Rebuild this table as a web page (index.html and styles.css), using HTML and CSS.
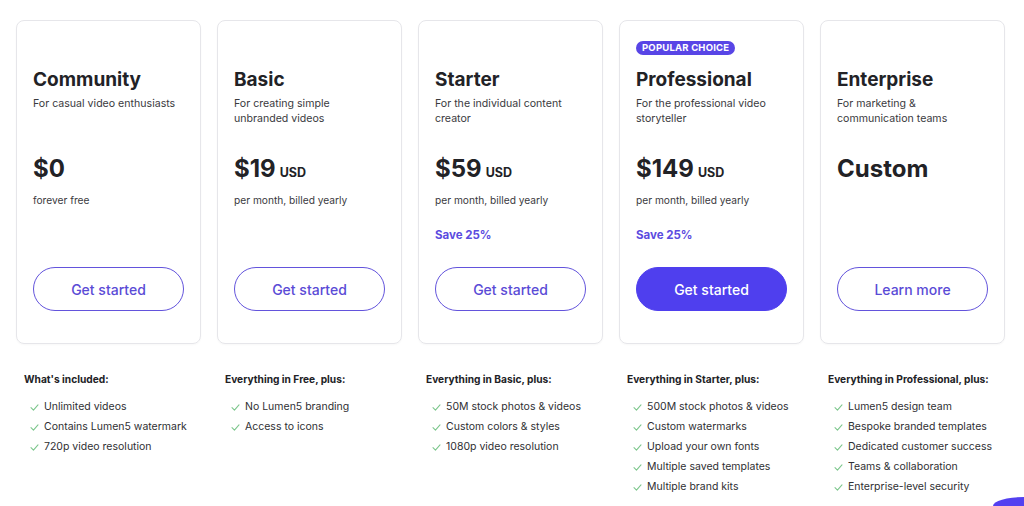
FILE: index.html
```html
<!DOCTYPE html>
<html lang="en">
<head>
<meta charset="utf-8">
<title>Pricing</title>
<link rel="stylesheet" href="styles.css">
</head>
<body>
<div class="pricing">
  <div class="card">
    <div class="badge-row"></div>
    <h2 class="plan">Community</h2>
    <p class="desc">For casual video enthusiasts</p>
    <div class="price">$0</div>
    <p class="period">forever free</p>
    <a class="btn">Get started</a>
  </div>
  <div class="card">
    <div class="badge-row"></div>
    <h2 class="plan">Basic</h2>
    <p class="desc">For creating simple unbranded videos</p>
    <div class="price">$19<span class="cur">USD</span></div>
    <p class="period">per month, billed yearly</p>
    <a class="btn">Get started</a>
  </div>
  <div class="card">
    <div class="badge-row"></div>
    <h2 class="plan">Starter</h2>
    <p class="desc">For the individual content creator</p>
    <div class="price">$59<span class="cur">USD</span></div>
    <p class="period">per month, billed yearly</p>
    <p class="save">Save 25%</p>
    <a class="btn">Get started</a>
  </div>
  <div class="card">
    <div class="badge-row"><span class="badge">POPULAR CHOICE</span></div>
    <h2 class="plan">Professional</h2>
    <p class="desc">For the professional video storyteller</p>
    <div class="price">$149<span class="cur">USD</span></div>
    <p class="period">per month, billed yearly</p>
    <p class="save">Save 25%</p>
    <a class="btn btn-primary">Get started</a>
  </div>
  <div class="card">
    <div class="badge-row"></div>
    <h2 class="plan">Enterprise</h2>
    <p class="desc narrow">For marketing &amp; communication teams</p>
    <div class="price">Custom</div>
    <a class="btn">Learn more</a>
  </div>

  <div class="features">
    <h3>What's included:</h3>
    <ul>
      <li><svg class="check" viewBox="0 0 10 8"><path d="M1 4.2 3.8 7 9 1"/></svg>Unlimited videos</li>
      <li><svg class="check" viewBox="0 0 10 8"><path d="M1 4.2 3.8 7 9 1"/></svg>Contains Lumen5 watermark</li>
      <li><svg class="check" viewBox="0 0 10 8"><path d="M1 4.2 3.8 7 9 1"/></svg>720p video resolution</li>
    </ul>
  </div>
  <div class="features">
    <h3>Everything in Free, plus:</h3>
    <ul>
      <li><svg class="check" viewBox="0 0 10 8"><path d="M1 4.2 3.8 7 9 1"/></svg>No Lumen5 branding</li>
      <li><svg class="check" viewBox="0 0 10 8"><path d="M1 4.2 3.8 7 9 1"/></svg>Access to icons</li>
    </ul>
  </div>
  <div class="features">
    <h3>Everything in Basic, plus:</h3>
    <ul>
      <li><svg class="check" viewBox="0 0 10 8"><path d="M1 4.2 3.8 7 9 1"/></svg>50M stock photos &amp; videos</li>
      <li><svg class="check" viewBox="0 0 10 8"><path d="M1 4.2 3.8 7 9 1"/></svg>Custom colors &amp; styles</li>
      <li><svg class="check" viewBox="0 0 10 8"><path d="M1 4.2 3.8 7 9 1"/></svg>1080p video resolution</li>
    </ul>
  </div>
  <div class="features">
    <h3>Everything in Starter, plus:</h3>
    <ul>
      <li><svg class="check" viewBox="0 0 10 8"><path d="M1 4.2 3.8 7 9 1"/></svg>500M stock photos &amp; videos</li>
      <li><svg class="check" viewBox="0 0 10 8"><path d="M1 4.2 3.8 7 9 1"/></svg>Custom watermarks</li>
      <li><svg class="check" viewBox="0 0 10 8"><path d="M1 4.2 3.8 7 9 1"/></svg>Upload your own fonts</li>
      <li><svg class="check" viewBox="0 0 10 8"><path d="M1 4.2 3.8 7 9 1"/></svg>Multiple saved templates</li>
      <li><svg class="check" viewBox="0 0 10 8"><path d="M1 4.2 3.8 7 9 1"/></svg>Multiple brand kits</li>
    </ul>
  </div>
  <div class="features">
    <h3>Everything in Professional, plus:</h3>
    <ul>
      <li><svg class="check" viewBox="0 0 10 8"><path d="M1 4.2 3.8 7 9 1"/></svg>Lumen5 design team</li>
      <li><svg class="check" viewBox="0 0 10 8"><path d="M1 4.2 3.8 7 9 1"/></svg>Bespoke branded templates</li>
      <li><svg class="check" viewBox="0 0 10 8"><path d="M1 4.2 3.8 7 9 1"/></svg>Dedicated customer success</li>
      <li><svg class="check" viewBox="0 0 10 8"><path d="M1 4.2 3.8 7 9 1"/></svg>Teams &amp; collaboration</li>
      <li><svg class="check" viewBox="0 0 10 8"><path d="M1 4.2 3.8 7 9 1"/></svg>Enterprise-level security</li>
    </ul>
  </div>
</div>
<div class="chat-bubble"></div>
</body>
</html>
```

FILE: styles.css
```css
* { box-sizing: border-box; }
html, body { margin: 0; padding: 0; background: #fff; overflow: hidden; }
body {
  font-family: "Inter", "Noto Sans", sans-serif;
  color: #2a2a2e;
  width: 1024px;
  height: 506px;
  position: relative;
}
.pricing {
  display: grid;
  grid-template-columns: repeat(5, 185px);
  column-gap: 16px;
  padding: 20px 0 0 16px;
}
.card {
  min-height: 324px;
  border: 1px solid #e6e6ea;
  border-radius: 8px;
  padding: 20px 16px 32px;
  display: flex;
  flex-direction: column;
  box-shadow: 0 1px 2px rgba(0,0,0,0.03);
}
.badge-row { height: 14px; display: flex; }
.badge {
  background: #5845e6;
  color: #fff;
  font-size: 9.5px;
  font-weight: 700;
  letter-spacing: 0.2px;
  line-height: 14px;
  padding: 0 6px;
  border-radius: 7px;
}
.plan {
  margin: 13px 0 0;
  font-size: 19px;
  line-height: 24px;
  font-weight: 700;
  color: #222226;
}
.desc {
  margin: 4px 0 0;
  font-size: 10.6px;
  line-height: 15px;
  min-height: 30px;
  color: #3a3a3e;
}
.desc.narrow { max-width: 120px; }
.price {
  margin-top: 28px;
  font-size: 24px;
  line-height: 30px;
  font-weight: 700;
  color: #222226;
}
.cur { font-size: 12.5px; line-height: 1; font-weight: 700; margin-left: 4px; }
.period {
  margin: 9px 0 0;
  font-size: 10.2px;
  line-height: 15px;
  color: #3a3a3e;
}
.save {
  margin: 19px 0 0;
  font-size: 11.5px;
  line-height: 16px;
  font-weight: 700;
  color: #5b4be0;
}
.btn {
  margin-top: auto;
  height: 44px;
  border: 1px solid #6354dc;
  border-radius: 22px;
  display: flex;
  align-items: center;
  justify-content: center;
  font-size: 14px;
  color: #5a4bd6;
  font-weight: 500;
}
.btn-primary { background: #4f3fee; border-color: #4f3fee; color: #fff; }
.features { padding: 27px 0 0 8px; }
.features h3 {
  margin: 0;
  font-size: 10.2px;
  line-height: 16px;
  font-weight: 700;
  color: #222226;
}
.features ul { list-style: none; margin: 10px 0 0; padding: 0; }
.features li {
  display: flex;
  align-items: center;
  font-size: 10.5px;
  line-height: 20px;
  color: #2f2f33;
}
.check {
  width: 9px;
  height: 7px;
  margin: 0 5px 0 6px;
  fill: none;
  stroke: #7cc68c;
  stroke-width: 1.2;
  stroke-linecap: round;
  stroke-linejoin: round;
}
.chat-bubble {
  position: absolute;
  left: 993px;
  top: 497px;
  width: 9px;
  height: 9px;
  border-radius: 100% 0 0 0 / 100% 0 0 0;
  width: 31px;
  height: 9px;
  background: #5340f0;
  border-top-left-radius: 31px 9px;
}
```
